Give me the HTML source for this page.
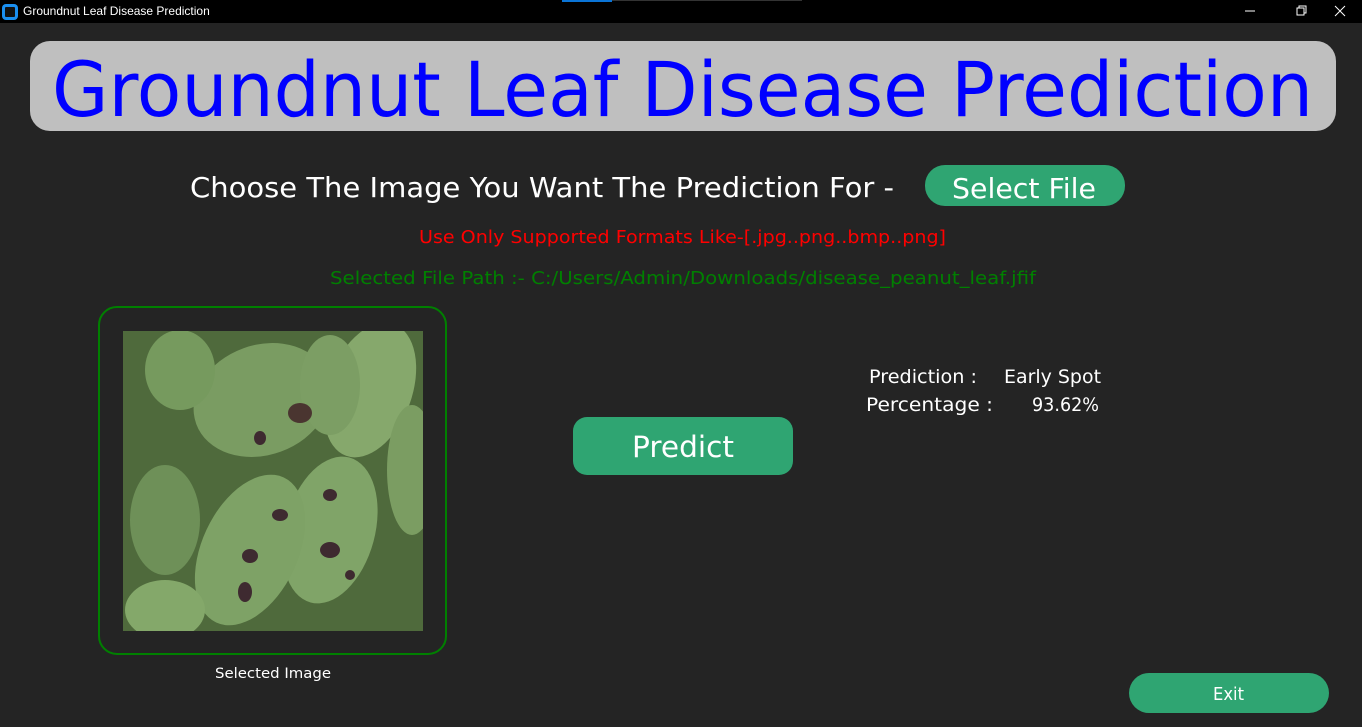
<!DOCTYPE html>
<html><head><meta charset="utf-8"><style>
body{margin:0;width:1362px;height:727px;background:#242424;overflow:hidden;font-family:"Liberation Sans",sans-serif;position:relative}
.a{position:absolute}
</style></head><body>
<div class="a" style="left:0;top:0;width:1362px;height:23px;background:#000"></div>
<div class="a" style="left:562px;top:0;width:240px;height:1px;background:#333"></div>
<div class="a" style="left:562px;top:0;width:50px;height:2px;background:#0a74d6"></div>
<div class="a" style="left:3px;top:5px;width:10px;height:10px;border:2px solid #1a8ff0;border-radius:3px;background:#111;box-shadow:0 0 0 1px #1a8ff0"></div>
<div class="a" style="left:23px;top:4px;color:#fff;font-size:12px">Groundnut Leaf Disease Prediction</div>
<svg class="a" style="left:1240px;top:0" width="122" height="23"><line x1="5" y1="11" x2="15" y2="11" stroke="#fff"/><rect x="57" y="8" width="7" height="7" fill="none" stroke="#fff"/><path d="M59 8V6h7v7h-2" fill="none" stroke="#fff"/><path d="M95 6l10 10M105 6l-10 10" stroke="#fff"/></svg>
<div class="a" style="left:30px;top:41px;width:1306px;height:90px;background:#bfbfbf;border-radius:20px"></div>
<svg class="a" style="left:0;top:0" width="1362" height="727">
<defs><clipPath id="c"><rect x="123" y="331" width="300" height="300"/></clipPath></defs>
<text x="52" y="116" font-family="DejaVu Sans, sans-serif" font-size="76" fill="#0000ff" textLength="1261" lengthAdjust="spacingAndGlyphs">Groundnut Leaf Disease Prediction</text>
<text x="190" y="197" font-family="DejaVu Sans, sans-serif" font-size="28" fill="#fff" textLength="704" lengthAdjust="spacingAndGlyphs">Choose The Image You Want The Prediction For -</text>
<rect x="925" y="165" width="200" height="41" rx="20" fill="#2fa572"/>
<text x="952" y="198" font-family="DejaVu Sans, sans-serif" font-size="28" fill="#fff" textLength="144" lengthAdjust="spacingAndGlyphs">Select File</text>
<text x="419" y="243" font-family="DejaVu Sans, sans-serif" font-size="18" fill="#ff0000" textLength="527" lengthAdjust="spacingAndGlyphs">Use Only Supported Formats Like-[.jpg..png..bmp..png]</text>
<text x="330" y="284" font-family="DejaVu Sans, sans-serif" font-size="18" fill="#008000" textLength="706" lengthAdjust="spacingAndGlyphs">Selected File Path :- C:/Users/Admin/Downloads/disease_peanut_leaf.jfif</text>
<rect x="99" y="307" width="347" height="347" rx="18" fill="none" stroke="#008000" stroke-width="2"/>
<rect x="123" y="331" width="300" height="300" fill="#4f6a3c"/>
<g clip-path="url(#c)">
<ellipse cx="262" cy="400" rx="70" ry="55" fill="#7a9c62" transform="rotate(-20 262 400)"/>
<ellipse cx="370" cy="390" rx="42" ry="70" fill="#86a86c" transform="rotate(20 370 390)"/>
<ellipse cx="330" cy="530" rx="45" ry="75" fill="#80a468" transform="rotate(15 330 530)"/>
<ellipse cx="250" cy="550" rx="48" ry="80" fill="#7ea266" transform="rotate(25 250 550)"/>
<ellipse cx="330" cy="385" rx="30" ry="50" fill="#7c9e64"/>
<ellipse cx="165" cy="520" rx="35" ry="55" fill="#6e9058"/>
<ellipse cx="412" cy="470" rx="25" ry="65" fill="#7b9d62"/>
<ellipse cx="180" cy="370" rx="35" ry="40" fill="#769a5e"/>
<ellipse cx="165" cy="610" rx="40" ry="30" fill="#84a86a"/>
<ellipse cx="300" cy="413" rx="12" ry="10" fill="#4a3530"/>
<ellipse cx="280" cy="515" rx="8" ry="6" fill="#3e2a30"/>
<ellipse cx="250" cy="556" rx="8" ry="7" fill="#3e2a30"/>
<ellipse cx="330" cy="550" rx="10" ry="8" fill="#3e2a30"/>
<ellipse cx="245" cy="592" rx="7" ry="10" fill="#3e2a30"/>
<ellipse cx="260" cy="438" rx="6" ry="7" fill="#3e2a30"/>
<ellipse cx="330" cy="495" rx="7" ry="6" fill="#3e2a30"/>
<ellipse cx="350" cy="575" rx="5" ry="5" fill="#3e2a30"/>
</g>
<text x="215" y="678" font-family="DejaVu Sans, sans-serif" font-size="14" fill="#fff" textLength="116" lengthAdjust="spacingAndGlyphs">Selected Image</text>
<rect x="573" y="417" width="220" height="58" rx="14" fill="#2fa572"/>
<text x="632" y="457" font-family="DejaVu Sans, sans-serif" font-size="29" fill="#fff" textLength="102" lengthAdjust="spacingAndGlyphs">Predict</text>
<text x="869" y="383" font-family="DejaVu Sans, sans-serif" font-size="19" fill="#fff" textLength="108" lengthAdjust="spacingAndGlyphs">Prediction :</text>
<text x="1004" y="383" font-family="DejaVu Sans, sans-serif" font-size="19" fill="#fff" textLength="97" lengthAdjust="spacingAndGlyphs">Early Spot</text>
<text x="866" y="411" font-family="DejaVu Sans, sans-serif" font-size="19" fill="#fff" textLength="127" lengthAdjust="spacingAndGlyphs">Percentage :</text>
<text x="1032" y="411" font-family="DejaVu Sans, sans-serif" font-size="19" fill="#fff" textLength="67" lengthAdjust="spacingAndGlyphs">93.62%</text>
<rect x="1129" y="673" width="200" height="40" rx="20" fill="#2fa572"/>
<text x="1213" y="700" font-family="DejaVu Sans, sans-serif" font-size="18" fill="#fff" textLength="31" lengthAdjust="spacingAndGlyphs">Exit</text>
</svg>
</body></html>
